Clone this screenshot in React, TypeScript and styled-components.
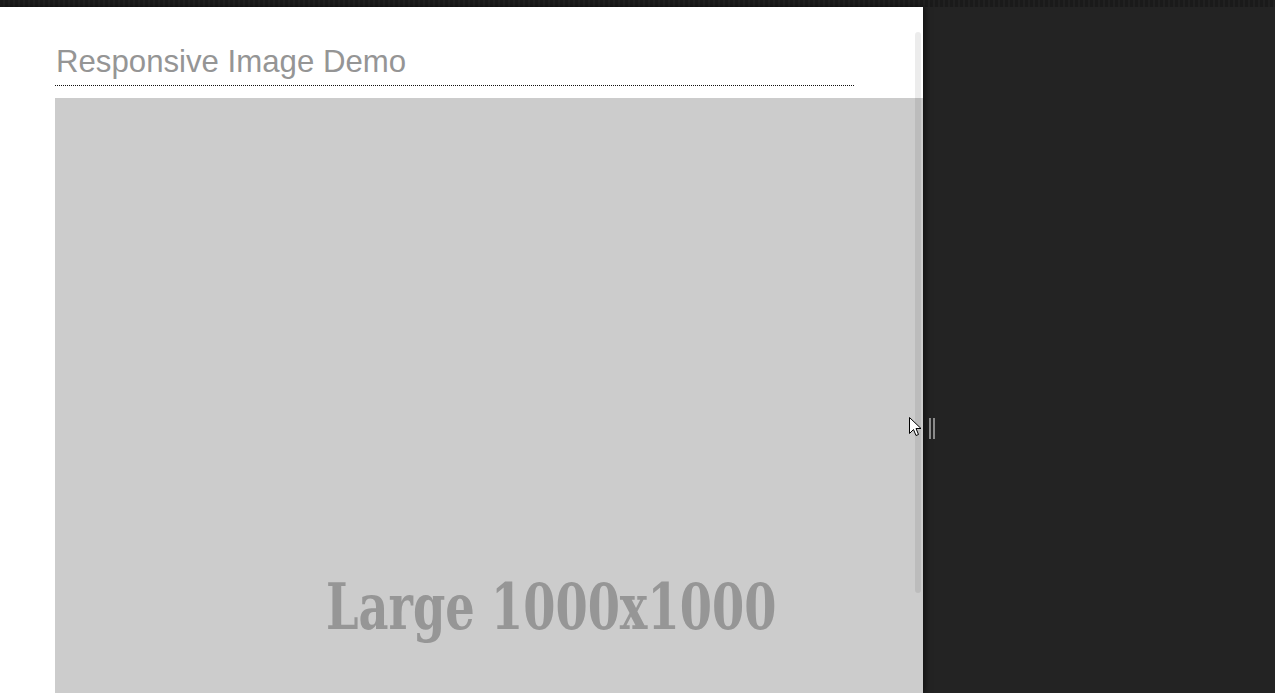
import styled, { createGlobalStyle } from 'styled-components'

const GlobalStyle = createGlobalStyle`
  html, body {
    margin: 0;
    padding: 0;
    height: 100%;
    overflow: hidden;
    background: #232323;
  }
  #root {
    height: 100%;
  }
`

const Screen = styled.div`
  position: relative;
  height: 100%;
  display: flex;
  flex-direction: column;
  background: #232323;
`

const TopStrip = styled.div`
  height: 7px;
  flex-shrink: 0;
  background: repeating-linear-gradient(90deg, #1a1a1a 0 3px, #202020 3px 5px);
`

const Frame = styled.div`
  position: relative;
  width: 923px;
  flex: 1;
  overflow: hidden;
  background: #ffffff;
  box-shadow: 2px 0 6px rgba(0, 0, 0, 0.55);
`

const Page = styled.div`
  padding: 36px 0 0 55px;
`

const Title = styled.h1`
  margin: 0;
  width: 798px;
  padding: 0 0 5px 1px;
  border-bottom: 1px dotted #111;
  font-family: 'Liberation Sans', Arial, sans-serif;
  font-weight: normal;
  font-size: 31.2px;
  line-height: 37px;
  color: #959595;
`

const Placeholder = styled.div`
  margin-top: 12px;
  width: 1000px;
  height: 1000px;
  background: #cccccc;
  display: flex;
  align-items: center;
  justify-content: center;
`

const PlaceholderLabel = styled.span`
  display: inline-block;
  font-family: 'DejaVu Serif', serif;
  font-weight: bold;
  font-size: 64px;
  color: #969696;
  margin-top: 16px;
  margin-left: -7px;
  transform: scaleX(0.724);
`

const ScrollThumb = styled.div`
  position: absolute;
  top: 25px;
  right: 2px;
  width: 6px;
  height: 561px;
  border-radius: 3px;
  background: rgba(0, 0, 0, 0.075);
`

const Cursor = styled.svg`
  position: absolute;
  left: 909px;
  top: 417px;
`

const ResizeHandle = styled.div`
  position: absolute;
  left: 929px;
  top: 418px;
  width: 6px;
  height: 21px;
  display: flex;
  justify-content: space-between;
  &::before,
  &::after {
    content: '';
    width: 2px;
    background: #8a8a8a;
  }
`

export default function App() {
  return (
    <>
      <GlobalStyle />
      <Screen>
        <TopStrip />
        <Frame>
          <Page>
            <Title>Responsive Image Demo</Title>
            <Placeholder>
              <PlaceholderLabel>Large 1000x1000</PlaceholderLabel>
            </Placeholder>
          </Page>
          <ScrollThumb />
        </Frame>
        <Cursor width="13" height="21" viewBox="0 0 13 21">
          <path d="M0.5 0.5 L0.5 16.5 L4.5 12.5 L7 18.5 L9.5 17.5 L7 11.5 L12 11.5 Z" fill="#fff" stroke="#000" strokeWidth="1" />
        </Cursor>
        <ResizeHandle />
      </Screen>
    </>
  )
}
